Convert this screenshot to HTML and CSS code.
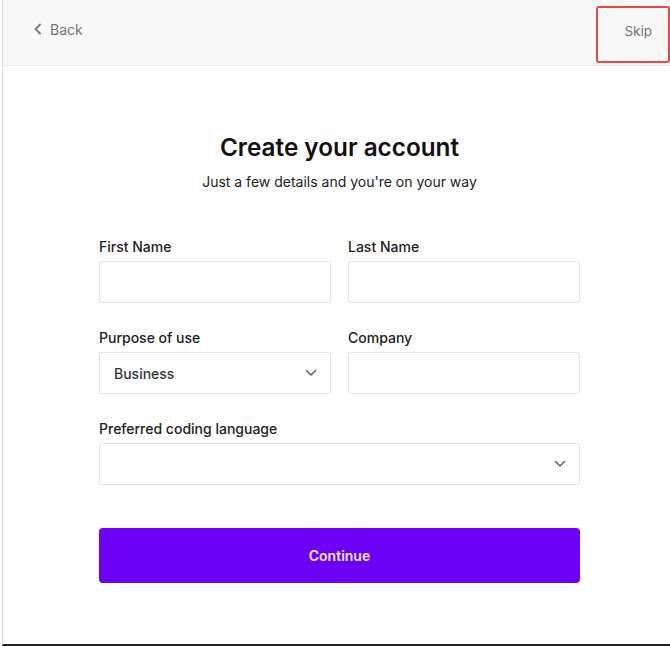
FILE: index.html
```html
<!DOCTYPE html>
<html lang="en">
<head>
<meta charset="utf-8">
<title>Create your account</title>
<link rel="stylesheet" href="styles.css">
</head>
<body>
<div class="frame">
  <header class="topbar">
    <a class="back" href="#">
      <svg class="back-icon" width="10" height="12" viewBox="0 0 10 12"><path d="M7 1.5 L2.5 6 L7 10.5" fill="none" stroke="#777" stroke-width="1.8" stroke-linecap="round" stroke-linejoin="round"/></svg>
      <span>Back</span>
    </a>
    <a class="skip" href="#">Skip</a>
  </header>
  <main class="content">
    <h1 class="title">Create your account</h1>
    <p class="subtitle">Just a few details and you're on your way</p>
    <form class="form">
      <div class="row">
        <label class="field">
          <span class="label">First Name</span>
          <span class="input"></span>
        </label>
        <label class="field">
          <span class="label">Last Name</span>
          <span class="input"></span>
        </label>
      </div>
      <div class="row">
        <label class="field">
          <span class="label">Purpose of use</span>
          <span class="input select"><span class="value">Business</span>
            <svg width="12" height="8" viewBox="0 0 12 8"><path d="M1.5 1.5 L6 6 L10.5 1.5" fill="none" stroke="#666" stroke-width="1.6" stroke-linecap="round" stroke-linejoin="round"/></svg>
          </span>
        </label>
        <label class="field">
          <span class="label">Company</span>
          <span class="input"></span>
        </label>
      </div>
      <div class="row single">
        <label class="field">
          <span class="label">Preferred coding language</span>
          <span class="input select"><span class="value"></span>
            <svg width="12" height="8" viewBox="0 0 12 8"><path d="M1.5 1.5 L6 6 L10.5 1.5" fill="none" stroke="#666" stroke-width="1.6" stroke-linecap="round" stroke-linejoin="round"/></svg>
          </span>
        </label>
      </div>
      <button type="button" class="continue">Continue</button>
    </form>
  </main>
</div>
</body>
</html>
```

FILE: styles.css
```css
* { box-sizing: border-box; }
html, body { margin: 0; padding: 0; }
body {
  font-family: Inter, "Noto Sans", sans-serif;
  background: #fff;
  color: #111;
}
.frame {
  margin-left: 2px;
  border-left: 1px solid #dcdcdc;
  border-bottom: 2px solid #222;
  height: 646px;
  display: flex;
  flex-direction: column;
}
.topbar {
  height: 66px;
  background: #f8f8f8;
  border-bottom: 1px solid #e6e6e6;
  display: flex;
  align-items: center;
  justify-content: space-between;
  padding-left: 30px;
  flex-shrink: 0;
}
.back {
  display: flex;
  align-items: center;
  gap: 7px;
  color: #777;
  font-size: 14px;
  text-decoration: none;
  margin-top: -7px;
}
.skip {
  align-self: flex-start;
  margin-top: 6px;
  width: 74px;
  height: 57px;
  border: 2px solid #ef4444;
  border-radius: 3px;
  color: #6f7380;
  font-size: 13.5px;
  text-decoration: none;
  display: flex;
  align-items: center;
  justify-content: flex-end;
  padding-right: 16px;
  padding-bottom: 8px;
}
.content {
  display: flex;
  flex-direction: column;
  align-items: center;
  padding-top: 66px;
  padding-left: 6px;
}
.title {
  margin: 0;
  font-size: 24.3px;
  font-weight: 600;
  line-height: 30px;
  color: #111;
}
.subtitle {
  margin: 10px 0 0;
  font-size: 14px;
  line-height: 20px;
  color: #222;
}
.form {
  width: 481px;
  margin: 46px 0 0 0;
  display: flex;
  flex-direction: column;
  gap: 26px;
}
.row {
  display: grid;
  grid-template-columns: 1fr 1fr;
  column-gap: 17px;
}
.row.single { grid-template-columns: 1fr; }
.field {
  display: flex;
  flex-direction: column;
  gap: 5px;
}
.label {
  font-size: 14px;
  font-weight: 500;
  line-height: 18px;
  color: #222;
}
.input {
  height: 42px;
  border: 1px solid #e4e4e4;
  border-radius: 2px;
  background: #fff;
  display: flex;
  align-items: center;
}
.select {
  justify-content: space-between;
  padding: 0 13px 0 14px;
}
.value {
  font-size: 14px;
  font-weight: 500;
  color: #333;
}
.continue {
  margin-top: 17px;
  height: 55px;
  border: none;
  border-radius: 4px;
  background: #6b00f5;
  color: #ece6ff;
  font-family: Inter, "Noto Sans", sans-serif;
  font-size: 14px;
  font-weight: 600;
}
```
